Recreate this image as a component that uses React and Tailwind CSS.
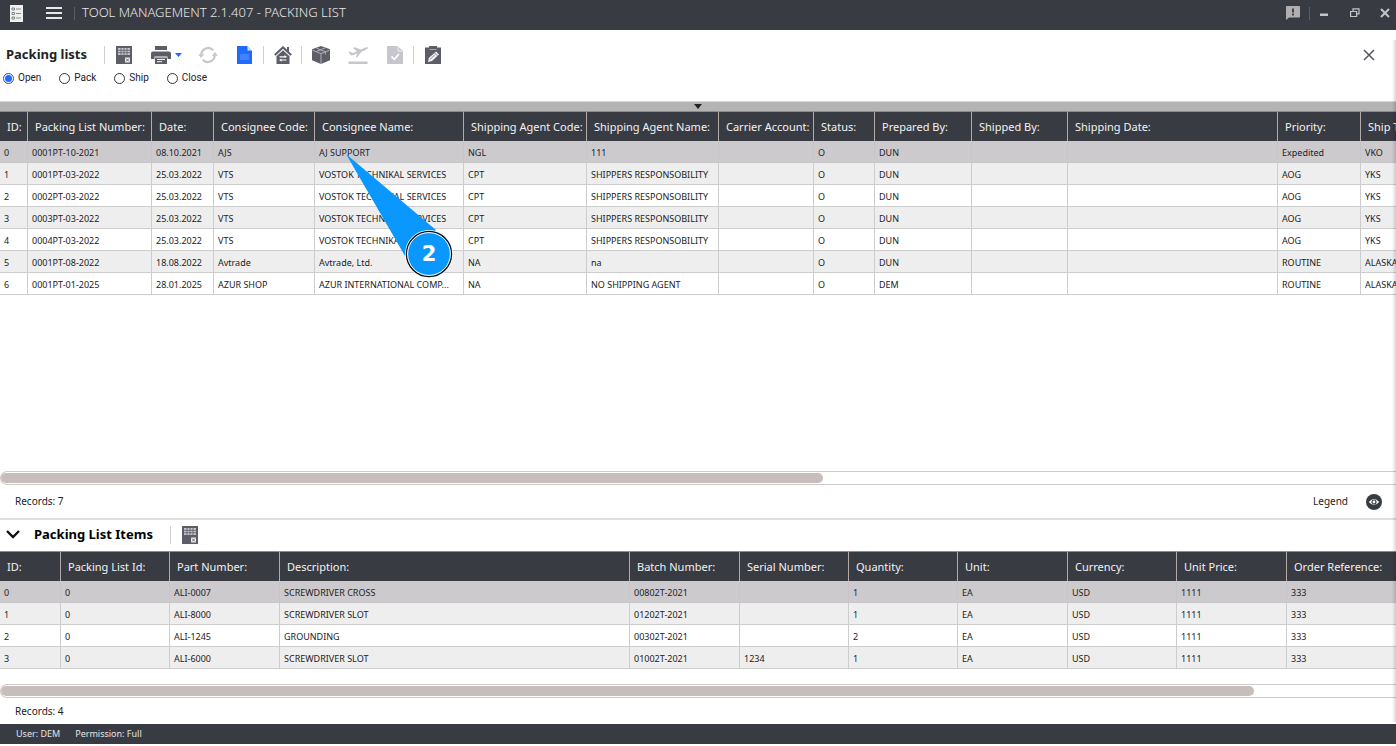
import React, { useState } from 'react';

const packingColumns = [
  { label: 'ID:', width: 28 },
  { label: 'Packing List Number:', width: 124 },
  { label: 'Date:', width: 62 },
  { label: 'Consignee Code:', width: 101 },
  { label: 'Consignee Name:', width: 149 },
  { label: 'Shipping Agent Code:', width: 123 },
  { label: 'Shipping Agent Name:', width: 132 },
  { label: 'Carrier Account:', width: 95 },
  { label: 'Status:', width: 61 },
  { label: 'Prepared By:', width: 97 },
  { label: 'Shipped By:', width: 96 },
  { label: 'Shipping Date:', width: 210 },
  { label: 'Priority:', width: 83 },
  { label: 'Ship To:', width: 110 },
];

const packingRows = [
  ['0', '0001PT-10-2021', '08.10.2021', 'AJS', 'AJ SUPPORT', 'NGL', '111', '', 'O', 'DUN', '', '', 'Expedited', 'VKO'],
  ['1', '0001PT-03-2022', '25.03.2022', 'VTS', 'VOSTOK TECHNIKAL SERVICES', 'CPT', 'SHIPPERS RESPONSOBILITY', '', 'O', 'DUN', '', '', 'AOG', 'YKS'],
  ['2', '0002PT-03-2022', '25.03.2022', 'VTS', 'VOSTOK TECHNIKAL SERVICES', 'CPT', 'SHIPPERS RESPONSOBILITY', '', 'O', 'DUN', '', '', 'AOG', 'YKS'],
  ['3', '0003PT-03-2022', '25.03.2022', 'VTS', 'VOSTOK TECHNIKAL SERVICES', 'CPT', 'SHIPPERS RESPONSOBILITY', '', 'O', 'DUN', '', '', 'AOG', 'YKS'],
  ['4', '0004PT-03-2022', '25.03.2022', 'VTS', 'VOSTOK TECHNIKAL SERVICES', 'CPT', 'SHIPPERS RESPONSOBILITY', '', 'O', 'DUN', '', '', 'AOG', 'YKS'],
  ['5', '0001PT-08-2022', '18.08.2022', 'Avtrade', 'Avtrade, Ltd.', 'NA', 'na', '', 'O', 'DUN', '', '', 'ROUTINE', 'ALASKA'],
  ['6', '0001PT-01-2025', '28.01.2025', 'AZUR SHOP', 'AZUR INTERNATIONAL COMP...', 'NA', 'NO SHIPPING AGENT', '', 'O', 'DEM', '', '', 'ROUTINE', 'ALASKA'],
];

const itemColumns = [
  { label: 'ID:', width: 61 },
  { label: 'Packing List Id:', width: 109 },
  { label: 'Part Number:', width: 110 },
  { label: 'Description:', width: 350 },
  { label: 'Batch Number:', width: 110 },
  { label: 'Serial Number:', width: 109 },
  { label: 'Quantity:', width: 109 },
  { label: 'Unit:', width: 110 },
  { label: 'Currency:', width: 109 },
  { label: 'Unit Price:', width: 110 },
  { label: 'Order Reference:', width: 110 },
];

const itemRows = [
  ['0', '0', 'ALI-0007', 'SCREWDRIVER CROSS', '00802T-2021', '', '1', 'EA', 'USD', '1111', '333'],
  ['1', '0', 'ALI-8000', 'SCREWDRIVER SLOT', '01202T-2021', '', '1', 'EA', 'USD', '1111', '333'],
  ['2', '0', 'ALI-1245', 'GROUNDING', '00302T-2021', '', '2', 'EA', 'USD', '1111', '333'],
  ['3', '0', 'ALI-6000', 'SCREWDRIVER SLOT', '01002T-2021', '1234', '1', 'EA', 'USD', '1111', '333'],
];

const GridIcon = () => (
  <svg width="16" height="18" viewBox="0 0 16 18">
    <path d="M0 0h16v18H0z" fill="#5c5d66" />
    <path d="M2 2h12v7H2z" fill="#c6c6ca" />
    <path d="M2 4.3h12M2 6.7h12M5 2v7M8 2v7M11 2v7" stroke="#5c5d66" strokeWidth="0.8" />
    <path d="M9 11.500h5v5H9z" fill="#f1f1f3" />
    <path d="M10 12.500l3 3M13 12.500l-3 3" stroke="#5c5d66" strokeWidth="0.9" />
  </svg>
);

const PrinterIcon = () => (
  <svg width="20" height="18" viewBox="0 0 20 18">
    <path d="M4 0h12v4H4z" fill="#5c5d66" />
    <path d="M2 5.500h16q2 0 2 2V13h-3.500v-2.500h-13V13H0V7.500q0-2 2-2z" fill="#5c5d66" />
    <path d="M4 11.500h12V18H4z" fill="#5c5d66" />
    <path d="M6 13.400h8M6 15.700h5" stroke="#fff" strokeWidth="1" />
  </svg>
);

const RefreshIcon = () => (
  <svg width="20" height="18" viewBox="0 0 20 18">
    <path d="M3.200 8.500A7 7.300 0 0 1 15.200 4.300M16.800 9.500A7 7.300 0 0 1 4.800 13.700" fill="none" stroke="#c6c6cc" strokeWidth="2.200" />
    <path d="M0 8.200h6.200L3.100 12zM13.800 9.800H20L16.900 6z" fill="#c6c6cc" />
  </svg>
);

const DocumentIcon = () => (
  <svg width="15" height="18" viewBox="0 0 15 18">
    <path d="M0 0h10l5 5v13H0z" fill="#1f6bff" />
    <path d="M10.500 0.500v4h4z" fill="#d5e3ff" />
    <path d="M3 8h9v6H3z" fill="#4381ff" />
  </svg>
);

const HouseIcon = () => (
  <svg width="18" height="18" viewBox="0 0 18 18">
    <path d="M.8 9L9 1.400 17.200 9" fill="none" stroke="#5c5d66" strokeWidth="2" />
    <path d="M13 1h2v5l-2-2z" fill="#5c5d66" />
    <path d="M2.500 10.200L9 4.200l6.500 6V18h-13z" fill="#5c5d66" />
    <path d="M1.600 10.200L9 3.400l7.400 6.800" fill="none" stroke="#d4d4d8" strokeWidth="0.700" />
    <path d="M5.500 10.800h6M6.500 14h6" stroke="#fff" strokeWidth="1.200" />
    <path d="M10.500 9l2.500 1.800-2.500 1.200zM7.500 12.800L5 14l2.500 1.800z" fill="#fff" />
  </svg>
);

const BoxIcon = () => (
  <svg width="18" height="18" viewBox="0 0 18 18">
    <path d="M9 0l9 3.300v11L9 18l-9-3.700v-11z" fill="#5c5d66" />
    <path d="M0.500 4.300L9 7.500l8.500-3.200M9 7.500V18M4.500 2.200l8.800 3.500v3M13.300 1.900L4.600 5.400" fill="none" stroke="#b9b9be" strokeWidth="0.900" />
  </svg>
);

const PlaneIcon = () => (
  <svg width="20" height="18" viewBox="0 0 20 18" fill="#c6c6cc">
    <path d="M.5 6l1.500-.5 2.700 1.500 4-1.400L5 2l1.800-.7 6.200 2.300 4.300-2q2.300-.8 2.700 0 .1 1-2 2.100l-4.500 2.100L9.500 11l-1.800.6 1.500-4L4.500 9.300q-1.500.400-2.200-.5z" />
    <path d="M0.500 15.500h19V18H.5z" />
  </svg>
);

const CheckDocIcon = () => (
  <svg width="16" height="18" viewBox="0 0 16 18">
    <path d="M0 0h10.500L16 5v13H0z" fill="#c6c6cc" />
    <path d="M11 .5V5h4.500" fill="none" stroke="#eeeef1" strokeWidth="1" />
    <path d="M4.500 10.500l2.800 2.800L12 8" fill="none" stroke="#fff" strokeWidth="1.800" />
  </svg>
);

const ClipboardIcon = () => (
  <svg width="16" height="18" viewBox="0 0 16 18">
    <path d="M0 1.500h4V0h8v1.500h4V18H0z" fill="#5c5d66" />
    <path d="M4.500 3.500h7" stroke="#a3a4a9" strokeWidth="1" />
    <path d="M3 16l.8-4 7.200-6.500 3 3L7 15z" fill="#f3f3f5" />
    <path d="M9.500 6.800l3 3M5 13.500l5-5" stroke="#5c5d66" strokeWidth="0.700" />
  </svg>
);

const Separator = () => <span className="h-[18px] w-px bg-[#d0d0d2]" />;

const ToolButton = ({ label, children }) => (
  <button type="button" aria-label={label} className="flex h-6 w-[37px] items-center justify-center">
    {children}
  </button>
);

const DataTable = ({ columns, rows }) => {
  const total = columns.reduce((sum, column) => sum + column.width, 0);

  return (
    <div className="overflow-hidden">
      <table className="table-fixed border-separate border-spacing-0" style={{ width: total }}>
        <colgroup>
          {columns.map((column) => (
            <col key={column.label} style={{ width: column.width }} />
          ))}
        </colgroup>
        <thead>
          <tr className="h-[30px] bg-[#393b43] text-[11px] text-[#f2f2f2]">
            {columns.map((column) => (
              <th key={column.label} className="overflow-hidden border-t border-r border-t-[#8f8a8c] border-r-[#b3aaaa] p-0 pt-[2px] pl-[7px] text-left font-normal whitespace-nowrap">
                {column.label}
              </th>
            ))}
          </tr>
        </thead>
        <tbody className="text-[9px] leading-4 text-[#222]">
          {rows.map((row, index) => (
            <tr
              key={row[0]}
              className={index === 0 ? 'h-[22px] bg-[#cdcace]' : index % 2 ? 'h-[22px] bg-[#eeeeee]' : 'h-[22px] bg-white'}
            >
              {row.map((cell, i) => (
                <td
                  key={i}
                  className={
                    index === 0
                      ? 'overflow-hidden border-r border-b border-[#c8c5c9] p-0 pt-[2px] pl-1 whitespace-nowrap'
                      : 'overflow-hidden border-r border-b border-[#cdcdcd] p-0 pt-[2px] pl-1 whitespace-nowrap'
                  }
                >
                  {cell}
                </td>
              ))}
            </tr>
          ))}
        </tbody>
      </table>
    </div>
  );
};

const ScrollTrack = ({ size }) => (
  <div className="h-[14px] rounded-l-lg border-y border-l border-[#cfcaca] py-px">
    <div className="h-[10px] rounded-full bg-[#c7bdbb]" style={{ width: size }} />
  </div>
);

const TitleBar = () => (
  <header className="flex h-[30px] items-center bg-[#393b43] pr-[6px] pb-1 pl-[10px] text-[#e8e8e8]">
    <svg width="13" height="17" viewBox="0 0 13 17">
      <path d="M0 0h13v17H0z" fill="#f0f0f0" />
      <path d="M2 3h2.500v2H2zM2 7.500h2.500v2H2zM2 12h2.500v2H2z" fill="none" stroke="#6b6c72" strokeWidth="0.800" />
      <path d="M6 4h5M6 8.500h5M6 13h5" stroke="#8b8c91" strokeWidth="1" />
    </svg>
    <button type="button" aria-label="Menu" className="ml-[23px]">
      <svg width="16" height="12" viewBox="0 0 16 12">
        <path d="M0 1h16M0 6h16M0 11h16" stroke="#e8e8e8" strokeWidth="2" />
      </svg>
    </button>
    <span className="ml-3 h-[13px] w-px bg-[#5b5d64]" />
    <h1 className="ml-[7px] text-[13px] font-light">TOOL MANAGEMENT 2.1.407 - PACKING LIST</h1>
    <div className="ml-auto flex items-center">
      <button type="button" aria-label="Feedback">
        <svg width="14" height="14" viewBox="0 0 14 14">
          <path d="M1 0h12q1 0 1 1v9.500q0 1-1 1H3L0 14V1q0-1 1-1z" fill="#b1aeb1" />
          <path d="M7 2.500v4M7 7.500v2" stroke="#44464d" strokeWidth="2" />
        </svg>
      </button>
      <span className="ml-[9px] h-[13px] w-px bg-[#5b5d64]" />
      <button type="button" aria-label="Minimize" className="ml-[10px]">
        <svg width="9" height="10" viewBox="0 0 9 10">
          <path d="M0 5.500h8v2.500H0z" fill="#c4c3c6" />
        </svg>
      </button>
      <button type="button" aria-label="Restore" className="ml-[21px]">
        <svg width="10" height="10" viewBox="0 0 10 10" fill="none" stroke="#c4c3c6">
          <path d="M3 3V.8h6v5H7" strokeWidth="1.200" />
          <path d="M.6 3.500h6v5h-6z" strokeWidth="1.200" />
        </svg>
      </button>
      <button type="button" aria-label="Exit" className="ml-5">
        <svg width="10" height="10" viewBox="0 0 10 10">
          <path d="M1 1l8 8M9 1L1 9" stroke="#c4c3c6" strokeWidth="2" />
        </svg>
      </button>
    </div>
  </header>
);

const Callout = () => (
  <div className="pointer-events-none absolute top-[154px] left-[345px] h-[124px] w-[109px]">
    <svg width="109" height="124" viewBox="0 0 109 124">
      <path d="M1 0L91 76 60 102z" fill="#0a98ff" />
      <circle cx="84" cy="100" r="24" fill="#fff" />
      <circle cx="84" cy="100" r="22.500" fill="#0a98ff" stroke="#111" strokeWidth="1.400" />
      <circle cx="84" cy="100" r="21.400" fill="none" stroke="#fff" strokeWidth="1" />
    </svg>
    <span className="absolute right-0 bottom-0 flex h-12 w-[50px] items-center justify-center font-['DejaVu_Sans',sans-serif] text-[21px] leading-5 font-bold text-white">2</span>
  </div>
);

const App = () => {
  const [filter, setFilter] = useState('Open');

  return (
    <div className="relative flex min-h-screen flex-col overflow-hidden bg-white pb-[2px] font-['Noto_Sans',sans-serif] text-[#222]">
      <TitleBar />

      <section className="h-[71px] pt-[13px]">
        <div className="flex items-center">
          <h2 className="w-[104px] pl-[6px] text-[13px] font-bold">Packing lists</h2>
          <Separator />
          <ToolButton label="Export"><GridIcon /></ToolButton>
          <button type="button" aria-label="Print" className="flex h-6 w-[47px] items-center gap-1 pl-[9px]">
            <PrinterIcon />
            <svg width="7" height="4" viewBox="0 0 7 4">
              <path d="M0 0h7L3.500 4z" fill="#1f6bff" />
            </svg>
          </button>
          <ToolButton label="Refresh"><RefreshIcon /></ToolButton>
          <ToolButton label="New"><DocumentIcon /></ToolButton>
          <Separator />
          <ToolButton label="Warehouse"><HouseIcon /></ToolButton>
          <Separator />
          <ToolButton label="Pack"><BoxIcon /></ToolButton>
          <ToolButton label="Ship"><PlaneIcon /></ToolButton>
          <ToolButton label="Complete"><CheckDocIcon /></ToolButton>
          <Separator />
          <ToolButton label="Edit"><ClipboardIcon /></ToolButton>
          <button type="button" aria-label="Close" className="mr-[21px] ml-auto">
            <svg width="12" height="12" viewBox="0 0 12 12">
              <path d="M1 1l10 10M11 1L1 11" stroke="#55565e" strokeWidth="1.500" />
            </svg>
          </button>
        </div>
        <div className="mt-[3px] flex gap-[18px] pl-[3px] font-[Roboto,sans-serif] text-[10px] leading-4">
          {['Open', 'Pack', 'Ship', 'Close'].map((name) => (
            <label key={name} className="flex items-center gap-1">
              <input
                type="radio"
                name="filter"
                checked={filter === name}
                onChange={() => setFilter(name)}
                className="size-[11px] appearance-none rounded-full border border-[#333] bg-white checked:border-[#1f4fb0] checked:bg-[#1f6bff] checked:bg-clip-content checked:p-px"
              />
              {name}
            </label>
          ))}
        </div>
      </section>

      <div className="flex h-[10px] items-center justify-center border-t border-[#d6d6d6] bg-[#b4b4b4]">
        <svg width="8" height="5" viewBox="0 0 8 5">
          <path d="M0 0h8L4 5z" fill="#222" />
        </svg>
      </div>

      <main className="flex-1">
        <DataTable columns={packingColumns} rows={packingRows} />
      </main>

      <ScrollTrack size="58.9%" />
      <div className="flex h-[33px] items-center justify-between pr-[14px] pl-[15px] text-[10px] text-[#222]">
        <span>Records: 7</span>
        <button type="button" className="flex items-center gap-[18px]">
          Legend
          <svg width="16" height="16" viewBox="0 0 16 16">
            <circle cx="8" cy="8" r="8" fill="#393b43" />
            <path d="M2.800 8Q8 2.200 13.200 8 8 13.800 2.800 8z" fill="#fff" />
            <circle cx="8" cy="8" r="2" fill="#fff" stroke="#393b43" strokeWidth="1.200" />
          </svg>
        </button>
      </div>

      <section className="border-t-2 border-[#e0dedf]">
        <div className="flex h-[31px] items-center pb-[2px]">
          <button type="button" aria-label="Collapse items" className="pl-[6px]">
            <svg width="14" height="9" viewBox="0 0 14 9">
              <path d="M1 1l6 6 6-6" fill="none" stroke="#111" strokeWidth="2.400" />
            </svg>
          </button>
          <h2 className="w-[150px] pl-[14px] text-[13px] font-bold whitespace-nowrap text-black">Packing List Items</h2>
          <Separator />
          <ToolButton label="Export items"><GridIcon /></ToolButton>
        </div>
        <DataTable columns={itemColumns} rows={itemRows} />
      </section>

      <div className="mt-[15px]">
        <ScrollTrack size="89.8%" />
      </div>
      <div className="flex h-[26px] items-center pl-[15px] text-[10px] text-[#222]">Records: 4</div>

      <footer className="flex h-5 items-center gap-[15px] bg-[#393b43] pl-4 text-[9px] text-[#e4e4e4]">
        <span>User: DEM</span>
        <span>Permission: Full</span>
      </footer>

      <div className="pointer-events-none absolute top-10 right-0 bottom-6 w-1 bg-linear-to-r from-transparent to-black/15" />
      <Callout />
    </div>
  );
};

export default App;
